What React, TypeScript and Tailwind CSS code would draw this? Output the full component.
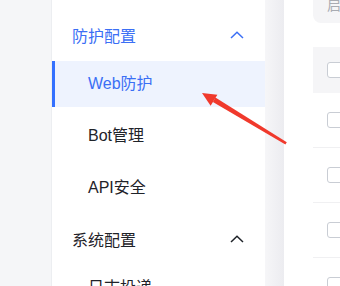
import React from "react";

const font = { fontFamily: '"Liberation Sans", "Noto Sans CJK SC", sans-serif' };

function Chevron({ color }: { color: string }) {
    return (
        <svg width="14" height="8" viewBox="0 0 14 8" fill="none" className="-mt-[5px]">
            <path d="M1 7L7 1.2L13 7" stroke={color} strokeWidth="1.5" />
        </svg>
    );
}

function GroupHeader({ label, active, className }: { label: string; active?: boolean; className?: string }) {
    return (
        <div className={`flex shrink-0 items-center justify-between pl-[20px] pr-[21px] h-[48px] ${className ?? ""}`}>
            <span className={`text-[16px] ${active ? "text-[#3b6ff5]" : "text-[#1f2329]"}`}>{label}</span>
            <Chevron color={active ? "#3b6ff5" : "#1f2329"} />
        </div>
    );
}

function MenuItem({ label, active, className }: { label: string; active?: boolean; className?: string }) {
    return (
        <div
            className={`relative flex shrink-0 items-center pl-[36px] h-[46px] text-[16px] ${active ? "bg-[#eef3fe] text-[#3b6ff5]" : "text-[#1f2329]"} ${className ?? ""}`}
        >
            {active && <div className="absolute left-0 top-0 bottom-0 w-[3px] bg-[#3370ff]" />}
            {label}
        </div>
    );
}

function Checkbox() {
    return <div className="w-[16px] h-[16px] shrink-0 rounded-[3px] border border-[#c9cdd4] bg-white" />;
}

export default function App() {
    return (
        <div className="relative w-[340px] h-[286px] overflow-hidden flex bg-white" style={font}>
            {/* left rail */}
            <div className="w-[52px] shrink-0 bg-[#f5f6f8] border-r border-[#eceef1]" />

            {/* sidebar menu */}
            <div className="w-[213px] shrink-0 bg-white flex flex-col">
                <GroupHeader label="防护配置" active className="mt-[13px]" />
                <MenuItem label="Web防护" active />
                <MenuItem label="Bot管理" className="mt-[6px]" />
                <MenuItem label="API安全" className="mt-[6px]" />
                <GroupHeader label="系统配置" className="mt-[6px]" />
                <MenuItem label="日志投递" />
            </div>

            {/* scroll strip */}
            <div className="w-[19px] shrink-0 bg-linear-to-r from-[#f6f6f8] to-[#ececf0]" />

            {/* content */}
            <div className="flex-1 min-w-0 overflow-hidden pl-[29px] flex flex-col">
                <div className="-mt-[13px] h-[36px] shrink-0 rounded-bl-[8px] bg-[#f5f5f7] flex items-center pl-[14px] text-[14px] text-[#a8abb2] whitespace-nowrap">
                    启用状态
                </div>
                <div className="mt-[24px] h-[46px] shrink-0 bg-[#f5f5f7] flex items-center pl-[14px]">
                    <Checkbox />
                </div>
                {[0, 1, 2, 3].map((i) => (
                    <div key={i} className="h-[55px] border-b border-[#f0f0f2] flex items-center pl-[14px] shrink-0">
                        <Checkbox />
                    </div>
                ))}
            </div>

            {/* red annotation arrow */}
            <svg className="absolute inset-0 pointer-events-none" width="340" height="286" viewBox="0 0 340 286">
                <polygon points="286.8,142.2 285.4,144.4 212.9,101.9 215.4,97.6" fill="#f0392c" />
                <polygon points="202,93 217.4,94.8 210.6,105.8" fill="#f0392c" />
            </svg>
        </div>
    );
}
